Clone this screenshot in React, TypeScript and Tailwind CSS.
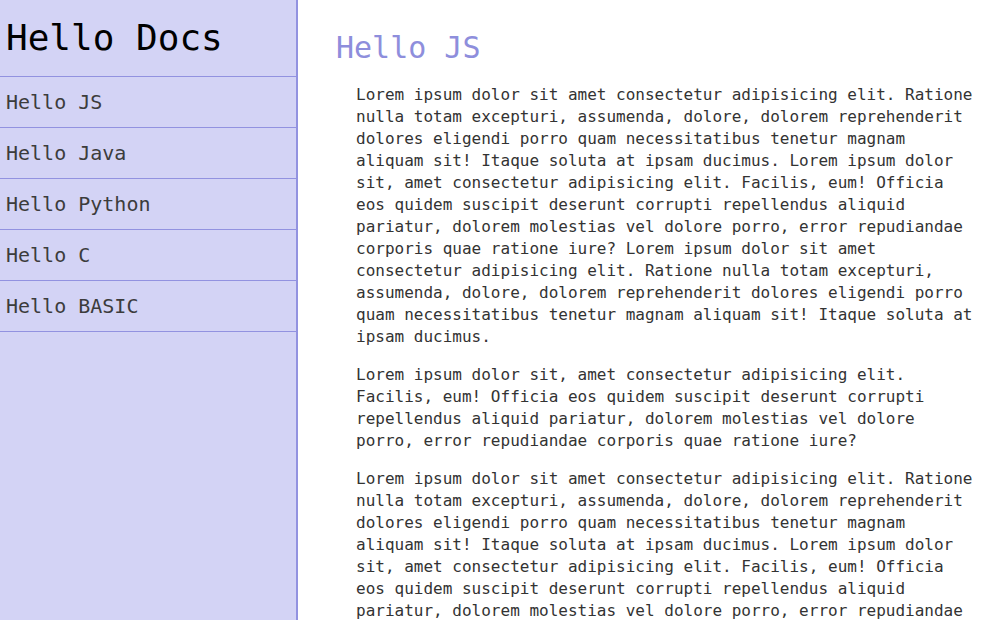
const LONG =
  "Lorem ipsum dolor sit amet consectetur adipisicing elit. Ratione nulla totam excepturi, assumenda, dolore, dolorem reprehenderit dolores eligendi porro quam necessitatibus tenetur magnam aliquam sit! Itaque soluta at ipsam ducimus. Lorem ipsum dolor sit, amet consectetur adipisicing elit. Facilis, eum! Officia eos quidem suscipit deserunt corrupti repellendus aliquid pariatur, dolorem molestias vel dolore porro, error repudiandae corporis quae ratione iure? Lorem ipsum dolor sit amet consectetur adipisicing elit. Ratione nulla totam excepturi, assumenda, dolore, dolorem reprehenderit dolores eligendi porro quam necessitatibus tenetur magnam aliquam sit! Itaque soluta at ipsam ducimus.";

const SHORT =
  "Lorem ipsum dolor sit, amet consectetur adipisicing elit. Facilis, eum! Officia eos quidem suscipit deserunt corrupti repellendus aliquid pariatur, dolorem molestias vel dolore porro, error repudiandae corporis quae ratione iure?";

const links = ["Hello JS", "Hello Java", "Hello Python", "Hello C", "Hello BASIC"];

export default function App() {
  return (
    <div className="flex h-screen overflow-hidden bg-white font-['DejaVu_Sans_Mono','Liberation_Mono',monospace]">
      <aside className="w-[298px] shrink-0 bg-[#d3d3f5] border-r-2 border-[#9292e0]">
        <div className="h-[77px] flex items-center px-[6px] border-b border-[#9292e0]">
          <h1 className="text-[36px] leading-10 text-black">Hello Docs</h1>
        </div>
        <nav>
          {links.map((l) => (
            <a
              key={l}
              href="#"
              className="block h-[51px] px-[6px] pt-[11px] text-xl leading-7 text-[#3c3c3c] border-b border-[#9292e0]"
            >
              {l}
            </a>
          ))}
        </nav>
      </aside>

      <main className="flex-1 pt-[30px] pl-[38px]">
        <h2 className="text-3xl leading-9 text-[#8e8edc]">Hello JS</h2>
        <div className="mt-[18px] ml-5 w-[620px] space-y-4 text-base leading-[22px] text-[#333]">
          <p>{LONG}</p>
          <p>{SHORT}</p>
          <p>{LONG}</p>
          <p>{SHORT}</p>
        </div>
      </main>
    </div>
  );
}
